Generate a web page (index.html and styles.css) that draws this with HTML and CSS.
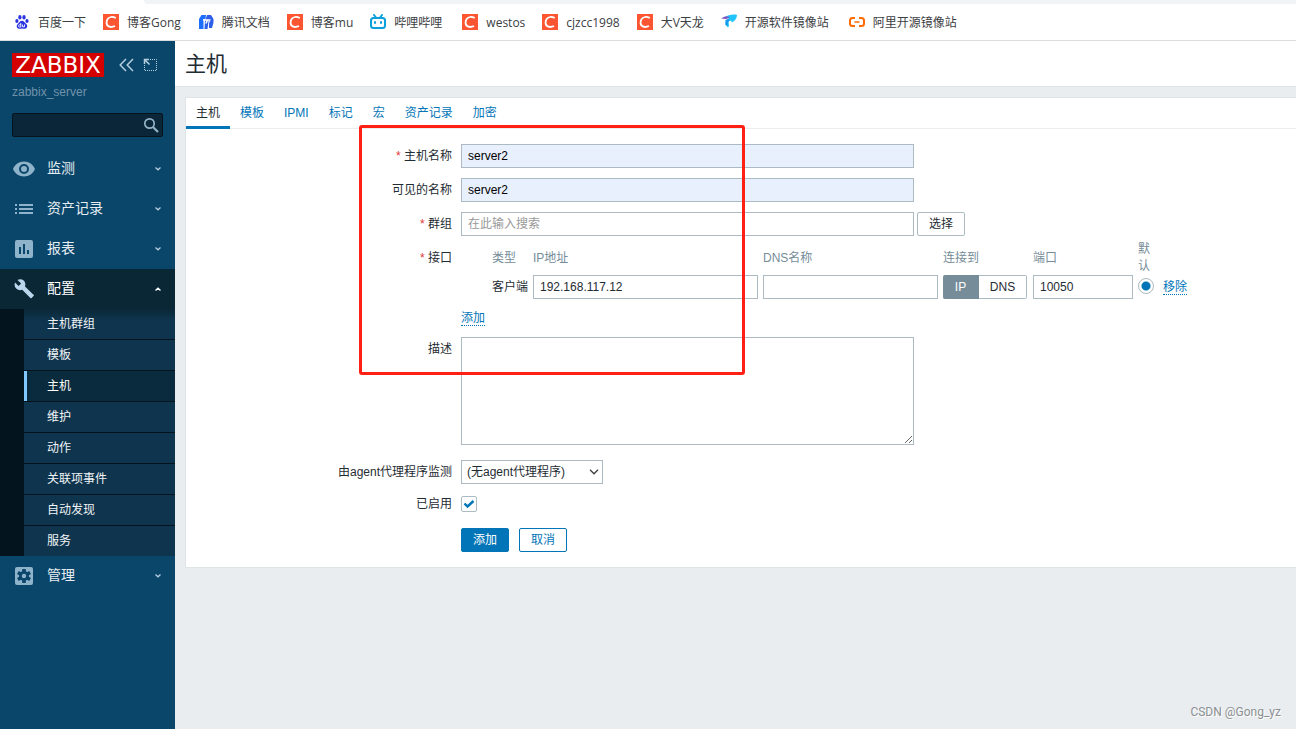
FILE: index.html
```html
<!DOCTYPE html>
<html lang="zh-CN">
<head>
<meta charset="utf-8">
<title>主机</title>
<link rel="stylesheet" href="styles.css">
</head>
<body>
<svg class="defs" aria-hidden="true">
  <symbol id="csdn" viewBox="0 0 16 16"><path fill="#fc5531" d="M0 0h16v16H0z"/><path d="M12.800 4C9.700 2.500 5.900 2.700 4.400 5.400c-1.400 2.600-1.100 6 1.300 7 1.900.8 4.200.6 6.300-.4" fill="none" stroke="#fff" stroke-width="1.900"/></symbol>
  <symbol id="chevron" viewBox="0 0 8 6"><path d="M1.500 1.500l2.500 2.300 2.500-2.300" fill="none" stroke="currentColor" stroke-width="1.300"/></symbol>
</svg>
<div class="strip"><div class="strip-tab"></div></div>
<nav class="bookmarks">
  <a href="#"><svg viewBox="0 0 16 16" fill="#2932e1"><ellipse cx="2.900" cy="7" rx="1.600" ry="2.100"/><ellipse cx="5.900" cy="3.200" rx="1.600" ry="2.200"/><ellipse cx="10" cy="3.200" rx="1.600" ry="2.200"/><ellipse cx="13" cy="7" rx="1.600" ry="2.100"/><path d="M8 6.800c1.800 0 2.600 1.800 4 3 2.200 1.900 1.200 4.900-1.200 4.900-1.100 0-1.700-.3-2.800-.3s-1.700.3-2.800.3c-2.500 0-3.400-3-1.200-4.900 1.400-1.200 2.200-3 4-3z"/><path d="M6.800 9v4H5.600c-1.400 0-1.400-2.300 0-2.300h1.200M8.500 10.500v2.300h2v-2.300" fill="none" stroke="#fff" stroke-width=".9"/></svg>百度一下</a>
  <a href="#"><svg><use href="#csdn"/></svg>博客Gong</a>
  <a href="#"><svg viewBox="0 0 16 16"><path fill="#1e6fff" d="M3.500 1h4.500l-.5 4H5.500v10H1V5z"/><path fill="#2d5fe8" d="M9 1h4l2.500 4v3.500L14 14h-3V9.500l1-2.500h-1.500L9.500 15H6.500l.5-8z"/><path fill="#fff" d="M5 5.200h7.500v1.500H10L8.800 9.500H7.200l1-2.800H5z"/></svg>腾讯文档</a>
  <a href="#"><svg><use href="#csdn"/></svg>博客mu</a>
  <a href="#" class="spaced"><svg viewBox="0 0 16 16" fill="none" stroke="#0ba1dc" stroke-width="2" stroke-linecap="round"><rect x="1" y="4" width="14" height="10" rx="2.500"/><path d="M4 1l2 2.500M12 1l-2 2.500M5 8v1M11 8v1"/></svg>哔哩哔哩</a>
  <a href="#"><svg><use href="#csdn"/></svg>westos</a>
  <a href="#"><svg><use href="#csdn"/></svg>cjzcc1998</a>
  <a href="#"><svg><use href="#csdn"/></svg>大V天龙</a>
  <a href="#" class="spaced"><svg viewBox="0 0 16 16"><path fill="#20c4fa" d="M4 3C7 1 12 0 16 1c0 3-2 6-5 7.500L10 6.500 7.500 7.500 8 12l-1 1.500L4.500 11C4 8 5 6 8 4.500z"/><path fill="#8052c0" d="M0 4.500C3 2 6 2 9 3L5.500 5z"/><path fill="#1998f0" d="M4.500 6L8 4.500c1 2-1 3-1 5L6.500 12l-2-1.500z"/></svg>开源软件镜像站</a>
  <a href="#"><svg viewBox="0 0 16 16" fill="none" stroke="#ff6a00" stroke-width="2"><path d="M6 4H3.500Q1 4 1 6.500v3Q1 12 3.500 12H6M10 4h2.500Q15 4 15 6.500v3Q15 12 12.500 12H10"/><path d="M5.500 8h5" stroke-width="1.500"/></svg>阿里开源镜像站</a>
</nav>
<div class="app">
  <aside class="sidebar">
    <div class="brand">
      <span class="logo">ZABBIX</span>
      <button class="icon-btn" aria-label="收起"><svg viewBox="0 0 16 16" fill="none" stroke="currentColor" stroke-width="1.500"><path d="M7 2L1.200 8 7 14M14 2L8.200 8l5.800 6"/></svg></button>
      <button class="icon-btn" aria-label="隐藏"><svg viewBox="0 0 16 16" fill="none" stroke="currentColor"><path d="M7 2.500h6.500v11h-12V8" stroke-dasharray="1 1"/><path d="M1.500 7V2.500H6M2 3l4.500 4.500" stroke-width="1.500"/></svg></button>
    </div>
    <div class="server">zabbix_server</div>
    <div class="search">
      <input type="text" aria-label="搜索">
      <button aria-label="搜索"><svg viewBox="0 0 16 16" fill="none" stroke="currentColor"><circle cx="6.500" cy="6.500" r="4.700" stroke-width="1.700"/><path d="M10 10l5 5" stroke-width="2.200"/></svg></button>
    </div>
    <nav class="menu">
      <a href="#" class="main"><svg class="ico" viewBox="0 0 24 24" fill="currentColor" fill-rule="evenodd"><path d="M12 4.500C7 4.500 2.700 7.600 1 12c1.700 4.400 6 7.500 11 7.500s9.300-3.100 11-7.500c-1.700-4.400-6-7.500-11-7.500zM12 17a5 5 0 110-10 5 5 0 010 10zm0-8a3 3 0 100 6 3 3 0 000-6z"/></svg>监测<svg class="chev"><use href="#chevron"/></svg></a>
      <a href="#" class="main"><svg class="ico" viewBox="0 0 24 24" fill="currentColor"><path d="M3 7h2v2H3zM7 7h14v2H7zM3 11h2v2H3zM7 11h14v2H7zM3 15h2v2H3zM7 15h14v2H7z"/></svg>资产记录<svg class="chev"><use href="#chevron"/></svg></a>
      <a href="#" class="main"><svg class="ico" viewBox="0 0 24 24" fill="currentColor"><path d="M19 3H5a2 2 0 00-2 2v14c0 1.100.9 2 2 2h14a2 2 0 002-2V5a2 2 0 00-2-2zM9 17H7v-7h2zm4 0h-2V7h2zm4 0h-2v-4h2z"/></svg>报表<svg class="chev"><use href="#chevron"/></svg></a>
      <a href="#" class="main open"><svg class="ico" viewBox="0 0 24 24" fill="currentColor"><path d="M20.700 18l-8.200-8.100a6 6 0 00-1.300-6C9.500 2.700 7 2.500 5 3.400l3.600 3.500L6.100 9.400 2.500 5.900c-.8 2-.4 4.400 1.200 6.100a6 6 0 006 1.300l8.200 8.100c.3.400.9.400 1.300 0l2-2.100c.5-.3.500-1-.5-1.300z" transform="translate(.5 -.5)"/></svg>配置<svg class="chev"><use href="#chevron"/></svg></a>
      <div class="sub">
        <a href="#">主机群组</a><a href="#">模板</a><a href="#" class="current">主机</a><a href="#">维护</a><a href="#">动作</a><a href="#">关联项事件</a><a href="#">自动发现</a><a href="#">服务</a>
      </div>
      <a href="#" class="main"><svg class="ico" viewBox="0 0 24 24"><rect x="3" y="3" width="18" height="18" rx="2" fill="currentColor"/><g stroke="#0a466a" stroke-width="3.600"><path d="M12 5v14M5.900 8.500l12.200 7M5.900 15.500l12.200-7"/></g><circle cx="12" cy="12" r="5" fill="#0a466a"/><circle cx="12" cy="12" r="2.200" fill="currentColor"/></svg>管理<svg class="chev"><use href="#chevron"/></svg></a>
    </nav>
  </aside>
  <main class="content">
    <header class="page-head"><h1>主机</h1></header>
    <section class="card">
      <nav class="tabs">
        <a href="#" class="active">主机</a><a href="#">模板</a><a href="#">IPMI</a><a href="#">标记</a><a href="#">宏</a><a href="#">资产记录</a><a href="#">加密</a>
      </nav>
      <form class="form">
        <div class="row"><label for="host"><span class="req">*</span> 主机名称</label><div class="field"><input class="wide filled" id="host" type="text" value="server2"></div></div>
        <div class="row"><label for="visible">可见的名称</label><div class="field"><input class="wide filled" id="visible" type="text" value="server2"></div></div>
        <div class="row"><label for="groups"><span class="req">*</span> 群组</label><div class="field"><input class="wide" id="groups" type="text" placeholder="在此输入搜索"><button type="button" class="btn grey">选择</button></div></div>
        <div class="row interfaces">
          <label for="ip"><span class="req">*</span> 接口</label>
          <div>
            <table>
              <thead><tr><th class="c-pad"></th><th class="c-type">类型</th><th class="c-ip">IP地址</th><th class="c-dns">DNS名称</th><th class="c-conn">连接到</th><th class="c-port">端口</th><th class="c-def">默认</th><th></th></tr></thead>
              <tbody><tr>
                <td></td><td>客户端</td>
                <td><input id="ip" type="text" value="192.168.117.12"></td>
                <td><input type="text" aria-label="DNS名称"></td>
                <td><div class="segment"><button type="button" class="on">IP</button><button type="button">DNS</button></div></td>
                <td><input type="text" value="10050" aria-label="端口"></td>
                <td><input type="radio" checked aria-label="默认"></td>
                <td><a href="#" class="dotted">移除</a></td>
              </tr></tbody>
            </table>
            <div class="add"><a href="#" class="dotted">添加</a></div>
          </div>
        </div>
        <div class="row"><label for="desc">描述</label><div class="field"><textarea class="wide" id="desc"></textarea></div></div>
        <div class="row proxy"><label for="proxy">由agent代理程序监测</label><div class="field"><div class="select"><select id="proxy"><option>(无agent代理程序)</option></select><svg viewBox="0 0 10 6"><path d="M1 .8l4 4 4-4" fill="none" stroke="#444" stroke-width="1.400"/></svg></div></div></div>
        <div class="row enabled"><label for="enabled">已启用</label><div class="field"><span class="check"><input id="enabled" type="checkbox" checked><svg viewBox="0 0 16 16"><path d="M3.500 7.500l3 3 6-5.500" fill="none" stroke="#0275b8" stroke-width="2.400"/></svg></span></div></div>
        <div class="actions"><button type="button" class="btn primary">添加</button><button type="button" class="btn outline">取消</button></div>
      </form>
    </section>
    <div class="highlight"></div>
    <div class="watermark">CSDN @Gong_yz</div>
  </main>
</div>
</body>
</html>
```
FILE: styles.css
```css
* { box-sizing: border-box; }
body {
  margin: 0;
  min-height: 100vh;
  display: flex;
  flex-direction: column;
  overflow-x: hidden;
  background: #fff;
  color: #1f2c33;
  font: 12px/17px "Liberation Sans", "Noto Sans CJK SC", sans-serif;
}
a { color: #0275b8; text-decoration: none; }
button, input, select, textarea { font: inherit; color: inherit; margin: 0; }
svg { display: block; flex: none; }
.defs { position: absolute; width: 0; height: 0; }

.strip { height: 4px; background: #fff; padding-left: 144px; }
.strip-tab { height: 4px; background: #f1f3f4; border-bottom-left-radius: 8px; }
.bookmarks {
  display: flex;
  align-items: center;
  gap: 17px;
  height: 37px;
  padding-left: 14px;
  border-bottom: 1px solid #dadce0;
  font-family: "Open Sans", "Noto Sans CJK SC", sans-serif;
  white-space: nowrap;
}
.bookmarks a { display: flex; align-items: center; gap: 8px; color: #3c4043; }
.bookmarks svg { width: 16px; height: 16px; }
.bookmarks .spaced { padding-right: 3px; }

.app { flex: 1; display: flex; }
.sidebar { width: 175px; flex: none; background: #0a466a; }
.brand { display: flex; align-items: center; gap: 8px; padding: 12px 12px 0; height: 36px; }
.logo {
  width: 92px;
  height: 24px;
  margin-right: 7px;
  background: #d40000;
  color: #fff;
  font: 23px/24px "DejaVu Sans", sans-serif;
  text-align: center;
}
.icon-btn { width: 16px; height: 16px; padding: 0; border: 0; background: none; color: #b5cddc; }
.server { padding: 7px 12px 0; color: #7093aa; }
.search {
  display: flex;
  align-items: center;
  height: 24px;
  margin: 12px;
  padding-right: 3px;
  background: #0a2638;
  border: 1px solid #05131d;
  border-radius: 2px;
}
.search input { flex: 1; min-width: 0; padding: 0 6px; border: 0; background: none; color: #fff; outline: 0; }
.search button { width: 16px; height: 16px; padding: 0; border: 0; background: none; color: #92b2c7; }
.main { display: flex; align-items: center; height: 40px; padding: 0 13px 1px 12px; color: #e6edf2; font-size: 14px; }
.main .ico { width: 24px; height: 24px; margin-right: 11px; color: #8fb3cb; }
.main .chev { width: 8px; height: 6px; margin-left: auto; color: #b5cddc; }
.main.open { background: #0a2736; color: #fff; }
.main.open .ico { color: #b8d7ec; }
.main.open .chev { transform: rotate(180deg); color: #fff; }
.sub {
  border-left: 24px solid #03141e;
  background: #0f344d;
}
.sub a { display: block; height: 31px; padding-left: 23px; line-height: 30px; border-bottom: 1px solid #03141e; color: #f0f4f7; }
.sub a:first-child { background: linear-gradient(#0a2736, #0f344d 10px); }
.sub a:last-child { height: 30px; border-bottom: 0; }
.sub .current { padding-left: 0; background: #0a2a3d; color: #fff; display: flex; }
.sub .current::before { content: ""; width: 3px; margin-right: 20px; background: #80c8ff; }

.content { flex: 1; min-width: 0; position: relative; background: #e9edf0; }
.page-head { height: 46px; padding-left: 10px; background: #fff; border-bottom: 1px solid #dfe4e7; }
h1 { margin: 0; font-size: 21px; font-weight: 400; line-height: 45px; }
.card { margin: 10px 0 0 10px; background: #fff; border: 1px solid #dfe4e7; border-right: 0; }
.tabs { display: flex; height: 31px; border-bottom: 1px solid #ebeef0; }
.tabs a { height: 31px; padding: 0 10px; line-height: 30px; }
.tabs .active { color: #1f2c33; border-bottom: 3px solid #0275b8; }
.form { padding: 15px 0; }
.row { display: grid; grid-template-columns: 266px 1fr; column-gap: 9px; margin-bottom: 10px; }
.row > label { text-align: right; line-height: 24px; }
.req { color: #e33734; }
.field { display: flex; gap: 3px; }
input[type="text"], textarea, select { border: 1px solid #acbbc2; border-radius: 0; background: #fff; outline: 0; }
.form input[type="text"] { height: 24px; padding: 0 6px; }
.wide { width: 453px; }
.form .filled { background: #e8f0fe; color: #000; }
::placeholder { color: #999; opacity: 1; }
.search input[type="text"] { border: 0; background: none; }
textarea { display: block; height: 108px; padding: 4px 6px; resize: both; }
.btn { height: 24px; padding: 0 11px; border: 1px solid #acbbc2; border-radius: 2px; background: #fff; line-height: 22px; }
.btn.primary { background: #0275b8; border-color: #0275b8; color: #fff; }
.btn.outline { border-color: #0275b8; color: #0275b8; }

.interfaces { margin-top: -6px; }
.interfaces > label { line-height: 36px; }
table { table-layout: fixed; width: 732px; border-collapse: collapse; }
th { height: 35px; padding: 1px 5px 0 0; color: #768d99; font-weight: 400; text-align: left; vertical-align: middle; }
td { height: 24px; padding: 0 5px 0 0; white-space: nowrap; }
td input[type="text"] { display: block; width: 100%; }
.c-pad { width: 31px; }
.c-type { width: 41px; }
.c-ip { width: 230px; }
.c-dns { width: 180px; }
.c-conn { width: 90px; }
.c-port { width: 105px; }
.c-def { width: 25px; padding-right: 12px; }
.segment { display: flex; width: 84px; }
.segment button { width: 48px; height: 24px; padding: 0; border: 1px solid #acbbc2; border-left: 0; border-radius: 0 2px 2px 0; background: #fff; }
.segment .on { width: 36px; background: #768d99; border-color: #768d99; border-radius: 2px 0 0 2px; color: #fff; }
input[type="radio"] {
  appearance: none;
  display: block;
  width: 16px;
  height: 16px;
  margin-bottom: 2px;
  border: 1px solid #acbbc2;
  border-radius: 50%;
  background: radial-gradient(circle, #0275b8 4px, #fff 5px);
}
.dotted { display: inline-block; line-height: 14px; border-bottom: 1px dotted #0275b8; }
.add { padding-top: 11px; }
.proxy { margin-top: 15px; margin-bottom: 12px; }
.select { position: relative; width: 142px; }
.select select { display: block; width: 100%; height: 24px; padding: 0 5px; appearance: none; }
.select svg { position: absolute; right: 4px; top: 9px; width: 10px; height: 6px; pointer-events: none; }
.enabled { margin-bottom: 16px; }
.enabled > label { line-height: 16px; }
.check { position: relative; }
.check input { appearance: none; display: block; width: 16px; height: 16px; border: 1px solid #acbbc2; border-radius: 2px; }
.check svg { position: absolute; inset: 0; pointer-events: none; }
.actions { display: flex; gap: 10px; padding-left: 275px; }

.highlight {
  position: absolute;
  left: 184px;
  top: 84px;
  width: 386px;
  height: 250px;
  border: 3px solid #ff2013;
  border-radius: 3px;
  pointer-events: none;
}
.watermark { position: absolute; right: 15px; bottom: 8px; color: #8b8f92; font: 12px/17px Roboto, sans-serif; text-shadow: 1px 1px 0 #fff; }
```
